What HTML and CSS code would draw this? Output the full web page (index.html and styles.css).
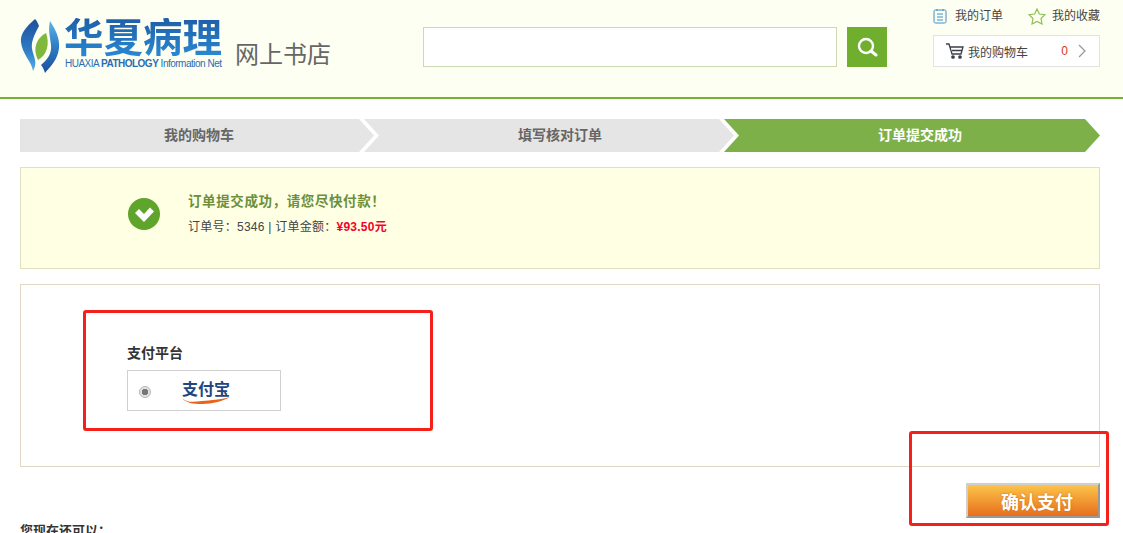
FILE: index.html
```html
<!DOCTYPE html>
<html lang="zh-CN">
<head>
    <meta charset="UTF-8">
    <title>华夏病理网上书店 - 订单提交成功</title>
    <link rel="stylesheet" href="styles.css">
</head>
<body>
    <div class="top-bar">
        <div class="logo">
            <svg class="logo-mark" width="40" height="56" viewBox="0 0 40 56">
                <defs>
                    <linearGradient id="bladeLeft" x1="0" y1="0" x2="0" y2="1">
                        <stop offset="0" stop-color="#1d4f9c"/>
                        <stop offset="0.6" stop-color="#2f7cc4"/>
                        <stop offset="1" stop-color="#55aee6"/>
                    </linearGradient>
                    <linearGradient id="bladeRight" x1="0" y1="0" x2="0" y2="1">
                        <stop offset="0" stop-color="#5ab4ea"/>
                        <stop offset="0.5" stop-color="#2f7cc4"/>
                        <stop offset="1" stop-color="#1d4f9c"/>
                    </linearGradient>
                </defs>
                <path d="M15 1C6 9 0 16 1 24c1 12 11 20 12 29 2-4 3-7 2-11-1-6-4-10-3-17 1-6 4-11 7-17-1-3-2-5-4-7z" fill="url(#bladeLeft)"/>
                <path d="M30 3c6 9 10 18 9 27-1 11-8 18-14 25-1-3-2-6-4-8 6-5 11-11 10-20-1-9-3-15-1-24z" fill="url(#bladeRight)"/>
                <path d="M26 15C17 20 12 30 18 42c9-5 12-16 8-27z" fill="#7fb83c"/>
            </svg>
            <div class="logo-text">
                <div class="logo-cn">华夏病理</div>
                <div class="logo-en">HUAXIA <b>PATHOLOGY</b> Information Net</div>
            </div>
            <div class="logo-shop">网上书店</div>
        </div>
        <div class="search">
            <input type="text" class="search-input">
            <button class="search-btn">
                <svg width="22" height="22" viewBox="0 0 22 22" fill="none" stroke="#fff">
                    <circle cx="10" cy="10" r="7" stroke-width="2.4"/>
                    <path d="M15 15l5 4" stroke-width="3" stroke-linecap="round"/>
                </svg>
            </button>
        </div>
        <div class="user-box">
            <div class="user-links">
                <a class="user-link" href="#">
                    <svg width="14" height="16" viewBox="0 0 14 16" fill="none" stroke="#3d8ed0">
                        <rect x="1" y="2" width="12" height="13" rx="1.5"/>
                        <path d="M4 1v2M10 1v2M4 6h6M4 9h6M4 12h6"/>
                    </svg>
                    我的订单
                </a>
                <a class="user-link" href="#">
                    <svg width="18" height="17" viewBox="0 0 18 17" fill="none" stroke="#8cc152" stroke-width="1.2">
                        <path d="M9 1l2.4 5 5.6.7-4 3.8 1 5.500L9 13.400 4 16l1-5.500-4-3.800L6.600 6z"/>
                    </svg>
                    我的收藏
                </a>
            </div>
            <a class="cart" href="#">
                <svg width="18" height="16" viewBox="0 0 18 16" fill="none" stroke="#3c3f4a" stroke-width="1.300">
                    <path d="M0 1h3l3 10h9l2-7H4M6 7.500h10"/>
                    <circle cx="7" cy="14" r="1.200" fill="#3c3f4a"/>
                    <circle cx="14" cy="14" r="1.200" fill="#3c3f4a"/>
                </svg>
                <span class="cart-label">我的购物车</span>
                <span class="cart-count">0</span>
                <svg width="9" height="14" viewBox="0 0 9 14" fill="none" stroke="#999" stroke-width="1.300">
                    <path d="M1 1l6 6-6 6"/>
                </svg>
            </a>
        </div>
    </div>

    <div class="container">
        <div class="steps">
            <div class="step step-first">我的购物车</div>
            <div class="step step-second">填写核对订单</div>
            <div class="step step-third">订单提交成功</div>
        </div>

        <div class="notice">
            <svg class="notice-icon" width="32" height="32" viewBox="0 0 32 32">
                <circle cx="16" cy="16" r="16" fill="#5fa52c"/>
                <path d="M7 15l4-4 5 5 6-6.500 4 4L16 24z" fill="#fff"/>
            </svg>
            <div>
                <div class="notice-title">订单提交成功，请您尽快付款！</div>
                <div class="notice-info">订单号：5346 | 订单金额：<span class="notice-price">¥93.50元</span></div>
            </div>
        </div>

        <div class="pay-box">
            <div class="pay-title">支付平台</div>
            <label class="pay-option">
                <span class="radio"></span>
                <span class="alipay">
                    <span class="alipay-text">支付宝</span>
                    <svg class="alipay-swoosh" width="50" height="10" viewBox="0 0 50 10" fill="none">
                        <path d="M1 3c5 5 12 4 20 3 9-1 18-1 28-4-7 4-17 7-28 7C12 9 5 8 1 3z" fill="#e8641b"/>
                    </svg>
                </span>
            </label>
        </div>

        <div class="actions">
            <button class="confirm-btn">确认支付</button>
        </div>

        <div class="more">您现在还可以：</div>
    </div>

    <div class="mark mark-pay"></div>
    <div class="mark mark-confirm"></div>
</body>
</html>
```

FILE: styles.css
```css
* {
    margin: 0;
    padding: 0;
    box-sizing: border-box;
}

html, body {
    height: 533px;
    overflow: hidden;
}

body {
    position: relative;
    background-color: #fff;
    font-family: "Liberation Sans", "Noto Sans CJK SC", sans-serif;
    font-size: 12px;
    color: #333;
}

a {
    color: inherit;
    text-decoration: none;
}

.top-bar {
    height: 99px;
    padding-left: 20px;
    display: flex;
    background-color: #fcfff1;
    border-bottom: 2px solid #78b035;
}

.logo {
    width: 403px;
    padding-top: 18px;
    display: flex;
    align-items: flex-start;
}

.logo-mark {
    flex-shrink: 0;
    margin-right: 4px;
}

.logo-text {
    width: 171px;
}

.logo-cn {
    font-size: 39.500px;
    line-height: 40px;
    font-weight: 700;
    white-space: nowrap;
    background: linear-gradient(180deg, #1f5ea8, #2a8ad4);
    -webkit-background-clip: text;
    -webkit-text-fill-color: transparent;
}

.logo-en {
    margin-left: 1px;
    font-size: 10px;
    line-height: 12px;
    letter-spacing: -0.5px;
    color: #2a6db5;
    white-space: nowrap;
}

.logo-shop {
    margin-top: 20px;
    font-size: 24px;
    line-height: 34px;
    color: #666;
    white-space: nowrap;
}

.search {
    width: 510px;
    padding-top: 27px;
    display: flex;
    align-items: flex-start;
    gap: 10px;
}

.search-input {
    width: 414px;
    height: 40px;
    background: #fff;
    border: 1px solid #cdd9b4;
    outline: none;
}

.search-btn {
    width: 40px;
    height: 40px;
    display: flex;
    align-items: center;
    justify-content: center;
    background: #70ae2e;
    border: none;
}

.user-box {
    width: 167px;
    padding-top: 8px;
}

.user-links {
    height: 27px;
    display: flex;
    justify-content: space-between;
}

.user-link {
    height: 16px;
    display: flex;
    align-items: center;
    gap: 8px;
    line-height: 16px;
    color: #444;
}

.user-link + .user-link {
    gap: 6px;
}

.cart {
    height: 32px;
    padding: 0 12px;
    display: flex;
    align-items: center;
    background: #fff;
    border: 1px solid #e3e3e3;
    color: #444;
}

.cart-label {
    margin-left: 4px;
    flex: 1;
}

.cart-count {
    margin-right: 10px;
    color: #d9381e;
}

.container {
    width: 1080px;
    margin-left: 20px;
}

.steps {
    margin-top: 20px;
    display: flex;
}

.step {
    height: 33px;
    line-height: 33px;
    font-size: 14px;
    font-weight: 700;
    text-align: center;
    color: #666;
    background: #e5e5e5;
}

.step-first {
    width: 354px;
    padding-left: 4px;
    clip-path: polygon(0 0, 339px 0, 100% 50%, 339px 100%, 0 100%);
}

.step-second {
    width: 370px;
    margin-left: -10px;
    padding-left: 22px;
    clip-path: polygon(0 0, 355px 0, 100% 50%, 355px 100%, 0 100%, 15px 50%);
}

.step-third {
    width: 376px;
    margin-left: -10px;
    padding-left: 16px;
    color: #fff;
    background: #7eb049;
    clip-path: polygon(0 0, 361px 0, 100% 50%, 361px 100%, 0 100%, 15px 50%);
}

.notice {
    height: 102px;
    margin-top: 15px;
    padding: 24px 0 0 107px;
    display: flex;
    align-items: flex-start;
    background: #ffffe4;
    border: 1px solid #e3dfc3;
}

.notice-icon {
    margin: 6px 28px 0 0;
    flex-shrink: 0;
}

.notice-title {
    font-size: 13.500px;
    line-height: 20px;
    font-weight: 700;
    letter-spacing: 0.6px;
    color: #6b8f3c;
}

.notice-info {
    margin-top: 6px;
    line-height: 18px;
    letter-spacing: 0.25px;
    color: #444;
}

.notice-price {
    font-weight: 700;
    color: #f5002b;
}

.pay-box {
    height: 183px;
    margin-top: 15px;
    padding: 58px 0 0 106px;
    background: #fff;
    border: 1px solid #e0d7c5;
}

.pay-title {
    height: 27px;
    font-size: 14px;
    line-height: 20px;
    font-weight: 700;
    color: #333;
}

.pay-option {
    width: 154px;
    height: 41px;
    display: flex;
    align-items: center;
    padding: 3px 0 0 11px;
    border: 1px solid #d0d0d0;
}

.radio {
    width: 12px;
    height: 12px;
    border-radius: 50%;
    background: radial-gradient(circle, #777 0 3px, #e2e2e2 3.500px);
    border: 1px solid #b5b5b5;
}

.alipay {
    position: relative;
    width: 50px;
    margin: -4px 0 0 30px;
    text-align: center;
}

.alipay-text {
    font-size: 16px;
    line-height: 20px;
    font-weight: 700;
    color: #23467f;
}

.alipay-swoosh {
    position: absolute;
    left: 0;
    top: 15px;
}

.actions {
    margin-top: 16px;
    display: flex;
    justify-content: flex-end;
}

.confirm-btn {
    width: 134px;
    height: 35px;
    padding-left: 8px;
    font-family: inherit;
    font-size: 18px;
    font-weight: 700;
    color: #fff;
    text-shadow: 0 0 2px #c86a14;
    background: linear-gradient(180deg, #fcc44b, #e76f1c);
    border: 2px solid;
    border-color: #cfcfcf #999 #999 #cfcfcf;
}

.more {
    margin-top: 4px;
    font-size: 13px;
    line-height: 18px;
    font-weight: 700;
    color: #333;
}

/* red marks drawn over the screenshot */
.mark {
    position: absolute;
    border: 3px solid #f5201a;
    border-radius: 3px;
}

.mark-pay {
    left: 83px;
    top: 310px;
    width: 350px;
    height: 121px;
}

.mark-confirm {
    left: 909px;
    top: 431px;
    width: 200px;
    height: 95px;
}
```
